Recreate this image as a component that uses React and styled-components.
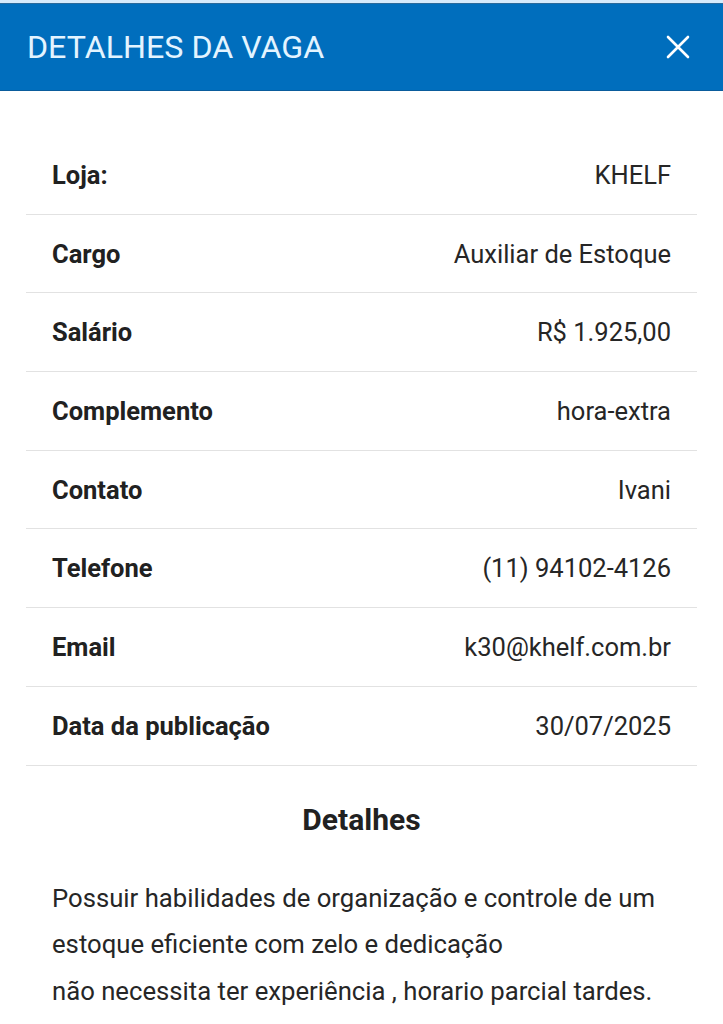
import styled, { createGlobalStyle } from 'styled-components';

const GlobalStyle = createGlobalStyle`
	html, body {
		margin: 0;
		padding: 0;
		background: #ffffff;
		font-family: Roboto, "Liberation Sans", sans-serif;
	}
`;

const fields = [
	{ label: 'Loja:', value: 'KHELF' },
	{ label: 'Cargo', value: 'Auxiliar de Estoque' },
	{ label: 'Salário', value: 'R$ 1.925,00' },
	{ label: 'Complemento', value: 'hora-extra' },
	{ label: 'Contato', value: 'Ivani' },
	{ label: 'Telefone', value: '(11) 94102-4126' },
	{ label: 'Email', value: 'k30@khelf.com.br' },
	{ label: 'Data da publicação', value: '30/07/2025' },
];

const CloseIcon = () => (
	<svg width="24" height="24" viewBox="0 0 24 24" fill="none">
		<path d="M2 2L22 22M22 2L2 22" stroke="#ffffff" strokeWidth="2.6" strokeLinecap="round" />
	</svg>
);

const App = () => {
	return (
		<>
			<GlobalStyle />
			<Page>
				<Header>
					<Title>DETALHES DA VAGA</Title>
					<CloseButton aria-label="Fechar">
						<CloseIcon />
					</CloseButton>
				</Header>
				<Body>
					<List>
						{fields.map((f) => (
							<Row key={f.label}>
								<Label>{f.label}</Label>
								<Value>{f.value}</Value>
							</Row>
						))}
					</List>
					<SectionTitle>Detalhes</SectionTitle>
					<Description>
						Possuir habilidades de organização e controle de um
						<br />
						estoque eficiente com zelo e dedicação
						<br />
						não necessita ter experiência , horario parcial tardes.
					</Description>
				</Body>
			</Page>
		</>
	);
};

// css
const Page = styled.div`
	width: 723px;
	min-height: 1024px;
	background: #ffffff;
	overflow: hidden;
`;

const Header = styled.header`
	display: flex;
	align-items: center;
	justify-content: space-between;
	height: 87px;
	padding: 0 33px 0 27px;
	background: #006ebd;
	border-top: 3px solid #d6ebfc;
	box-shadow: inset 0 1px 0 #2a6a9c;
	box-sizing: content-box;
	border-bottom: 1px solid #0a5c9c;
`;

const Title = styled.h1`
	margin: 0;
	font-size: 32.2px;
	font-weight: 400;
	color: #e3f4ff;
`;

const CloseButton = styled.button`
	display: flex;
	align-items: center;
	justify-content: center;
	padding: 0;
	border: none;
	background: transparent;
	cursor: pointer;
`;

const Body = styled.main`
	padding: 45px 26px 0;
`;

const List = styled.div`
	display: flex;
	flex-direction: column;
`;

const Row = styled.div`
	display: flex;
	align-items: center;
	justify-content: space-between;
	height: 77.7px;
	padding: 0 26px;
	border-bottom: 1px solid #e2e2e2;
`;

const Label = styled.span`
	font-size: 25.5px;
	font-weight: 700;
	color: #212121;
`;

const Value = styled.span`
	font-size: 25.5px;
	font-weight: 400;
	color: #262626;
`;

const SectionTitle = styled.h2`
	margin: 36px 0 0;
	text-align: center;
	font-size: 30px;
	font-weight: 700;
	color: #212121;
`;

const Description = styled.p`
	margin: 38px 0 0;
	padding: 0 26px;
	font-size: 25.7px;
	line-height: 46.5px;
	color: #262626;
`;

export default App;
